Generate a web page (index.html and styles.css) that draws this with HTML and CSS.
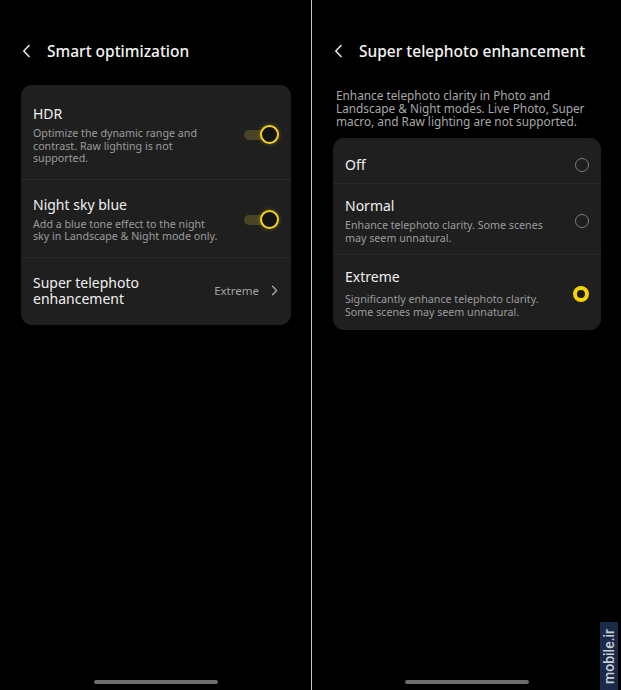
FILE: index.html
```html
<!DOCTYPE html>
<html lang="en">
<head>
  <meta charset="UTF-8">
  <meta name="viewport" content="width=device-width, initial-scale=1">
  <title>Camera settings</title>
  <link rel="stylesheet" href="styles.css">
</head>
<body>
  <div class="screens">
    <!-- left: smart optimization -->
    <section class="panel">
      <header class="topbar">
        <svg class="back" width="9" height="14" viewBox="0 0 9 14"><path d="M7 1.5 L1.8 7 L7 12.5" fill="none" stroke="#e6e6e6" stroke-width="1.6" stroke-linecap="round" stroke-linejoin="round"/></svg>
        <h1>Smart optimization</h1>
      </header>

      <div class="card settings">
        <div class="row">
          <div class="text">
            <div class="title">HDR</div>
            <div class="desc">Optimize the dynamic range and contrast. Raw lighting is not supported.</div>
          </div>
          <span class="toggle on"></span>
        </div>
        <div class="row">
          <div class="text">
            <div class="title">Night sky blue</div>
            <div class="desc">Add a blue tone effect to the night sky in Landscape &amp; Night mode only.</div>
          </div>
          <span class="toggle on"></span>
        </div>
        <div class="row">
          <div class="text">
            <div class="title">Super telephoto<br>enhancement</div>
          </div>
          <span class="value">Extreme</span>
          <svg class="more" width="7" height="11" viewBox="0 0 7 11"><path d="M1.5 1.2 L5.6 5.5 L1.5 9.8" fill="none" stroke="#a8a8a8" stroke-width="1.3" stroke-linecap="round" stroke-linejoin="round"/></svg>
        </div>
      </div>

      <div class="home-bar"></div>
    </section>

    <div class="divider"></div>

    <!-- right: super telephoto enhancement -->
    <section class="panel">
      <header class="topbar">
        <svg class="back" width="9" height="14" viewBox="0 0 9 14"><path d="M7 1.5 L1.8 7 L7 12.5" fill="none" stroke="#e6e6e6" stroke-width="1.6" stroke-linecap="round" stroke-linejoin="round"/></svg>
        <h1>Super telephoto enhancement</h1>
      </header>

      <p class="intro">Enhance telephoto clarity in Photo and Landscape &amp; Night modes. Live Photo, Super macro, and Raw lighting are not supported.</p>

      <div class="card options">
        <div class="row">
          <div class="text">
            <div class="title">Off</div>
          </div>
          <span class="radio"></span>
        </div>
        <div class="row">
          <div class="text">
            <div class="title">Normal</div>
            <div class="desc">Enhance telephoto clarity. Some scenes may seem unnatural.</div>
          </div>
          <span class="radio"></span>
        </div>
        <div class="row">
          <div class="text">
            <div class="title">Extreme</div>
            <div class="desc">Significantly enhance telephoto clarity. Some scenes may seem unnatural.</div>
          </div>
          <span class="radio checked"></span>
        </div>
      </div>

      <div class="home-bar"></div>
    </section>
  </div>

  <div class="watermark">mobile.ir</div>
</body>
</html>
```

FILE: styles.css
```css
body {
  margin: 0;
  background: #000;
  font-family: "Noto Sans", "Open Sans", sans-serif;
  color: #f2f2f2;
}
.screens {
  display: flex;
  width: 621px;
  height: 690px;
}
.panel {
  display: flex;
  flex-direction: column;
  padding: 0 20px 0 21px;
}
.panel:first-child {
  width: 270px;
}
.panel:last-child {
  flex: 1;
}
.divider {
  width: 1px;
  background: #c4c4c4;
}
.topbar {
  display: flex;
  align-items: center;
  height: 30px;
  margin-top: 36px;
}
.back {
  margin-left: 1px;
}
.topbar h1 {
  margin: 0 0 0 16px;
  font-size: 15.5px;
  font-weight: 500;
  color: #f4f4f4;
}
.card {
  background: #1f1f1f;
  border-radius: 11px;
  padding: 4px 0;
}
.settings {
  margin-top: 19px;
}
.row {
  display: flex;
  align-items: center;
  padding: 17px 12px 14px 12px;
  border-top: 1px solid #2a2a2a;
}
.row:first-child {
  border-top: none;
}
.text {
  flex: 1;
  padding-right: 22px;
}
.title {
  font-size: 14px;
  line-height: 16px;
  color: #f0f0f0;
}
.desc {
  margin-top: 5px;
  font-size: 10.7px;
  line-height: 12.5px;
  color: #9c9c9c;
}
.value {
  font-size: 11.5px;
  color: #a3a3a3;
  margin-right: 12px;
}
.more {
  margin-right: 1px;
}
.toggle {
  position: relative;
  width: 35px;
  height: 20px;
  flex: none;
}
.toggle::before {
  content: "";
  position: absolute;
  left: 0;
  top: 5px;
  width: 24px;
  height: 10px;
  border-radius: 5px;
  background: #4a4427;
}
.toggle::after {
  content: "";
  position: absolute;
  right: 0;
  top: 0;
  width: 15px;
  height: 15px;
  border-radius: 50%;
  border: 2.5px solid #f3cf1f;
  background: #141414;
  box-shadow: 0 0 4px rgba(243, 207, 31, 0.35);
}
.intro {
  margin: 23px 6px 10px 3px;
  font-size: 11.8px;
  line-height: 13px;
  color: #a8a8a8;
}
.options {
  padding: 5px 0 2px;
}
.options .row {
  padding: 14px 12px 10px 12px;
}
.options .row:last-child .desc {
  margin-top: 8px;
}
.radio {
  width: 12px;
  height: 12px;
  border: 1.6px solid #7d7d7d;
  border-radius: 50%;
  flex: none;
}
.radio.checked {
  width: 8px;
  height: 8px;
  border: 4px solid #f5d400;
  background: #1a1a1a;
}
.home-bar {
  margin: auto auto 6px;
  width: 124px;
  height: 4px;
  border-radius: 2px;
  background: #6c6c6c;
}
.watermark {
  position: absolute;
  left: 600px;
  top: 622px;
  width: 18px;
  height: 68px;
  background: #1b2a48;
  color: #c9ced8;
  font-family: Roboto, sans-serif;
  font-size: 14px;
  font-weight: 500;
  writing-mode: vertical-rl;
  transform: rotate(180deg);
  text-align: center;
  line-height: 18px;
}
```
